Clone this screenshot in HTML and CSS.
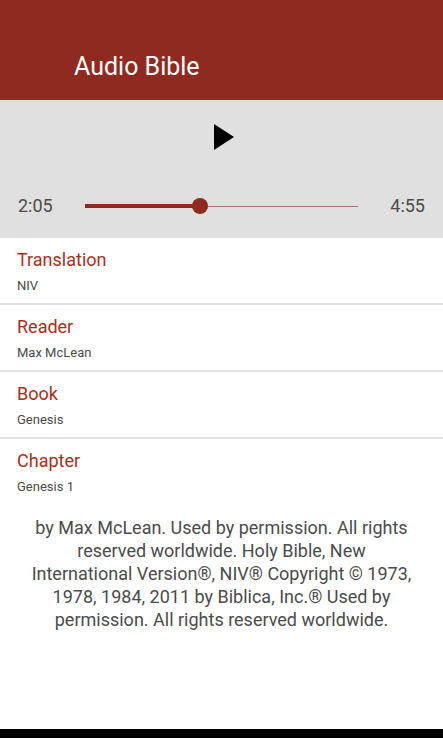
FILE: index.html
```html
<!DOCTYPE html>
<html lang="en">
<head>
<meta charset="utf-8">
<meta name="viewport" content="width=device-width, initial-scale=1">
<title>Audio Bible</title>
<link rel="stylesheet" href="styles.css">
</head>
<body>
<header class="app-bar"><h1 class="app-title">Audio Bible</h1></header>
<main class="content">
<section class="player" aria-label="Player">
<button class="play" type="button" aria-label="Play"><svg class="play-icon" viewBox="0 0 24 28" aria-hidden="true"><path d="M4 1v26l20-13z"/></svg></button>
<div class="timeline">
<span class="time">2:05</span>
<input class="seek" type="range" min="0" max="295" value="123" aria-label="Playback position">
<span class="time">4:55</span>
</div>
</section>
<nav class="options" aria-label="Audio options">
<button class="option" type="button"><span class="option-name">Translation</span><span class="option-value">NIV</span></button>
<button class="option" type="button"><span class="option-name">Reader</span><span class="option-value">Max McLean</span></button>
<button class="option" type="button"><span class="option-name">Book</span><span class="option-value">Genesis</span></button>
<button class="option" type="button"><span class="option-name">Chapter</span><span class="option-value">Genesis 1</span></button>
</nav>
<p class="copyright">by Max McLean. Used by permission. All rights reserved worldwide. Holy Bible, New International Version®, NIV® Copyright © 1973, 1978, 1984, 2011 by Biblica, Inc.® Used by permission. All rights reserved worldwide.</p>
</main>
<footer class="system-bar"></footer>
</body>
</html>
```
FILE: styles.css
```css
* { box-sizing: border-box; }
body {
  margin: 0;
  min-height: 100vh;
  display: flex;
  flex-direction: column;
  background: #fff;
  color: #4b4b4b;
  font-family: Roboto, sans-serif;
}
button { border: 0; padding: 0; background: none; font: inherit; color: inherit; }
.app-bar { padding: 51px 74px 17px; background: #8f2a20; color: #fff; }
.app-title { margin: 0; font-size: 25px; line-height: 32px; font-weight: 400; }
.content { flex: 1; }
.player { background: #e0e0e0; padding: 22px 18px 20px; }
.play { display: block; margin: 0 auto; width: 26px; height: 30px; }
.play-icon { display: block; width: 24px; height: 28px; margin: auto; fill: #000; }
.timeline { display: flex; align-items: center; justify-content: space-between; margin-top: 42px; }
.time { font-size: 18px; line-height: 24px; }
.seek {
  appearance: none;
  flex: 1;
  min-width: 0;
  height: 16px;
  margin: 0 32px;
  background:
    linear-gradient(#8f2a20, #8f2a20) left center / 42% 4px no-repeat,
    linear-gradient(#a07672, #a07672) center / 100% 1px no-repeat;
}
.seek::-webkit-slider-thumb { appearance: none; width: 16px; height: 16px; border-radius: 50%; background: #8f2a20; }
.option {
  display: flex;
  flex-direction: column;
  gap: 4px;
  width: 100%;
  padding: 10px 17px 8px;
  text-align: left;
}
.option + .option { border-top: 2px solid #e2e2e2; }
.option-name { font-size: 18px; line-height: 24px; color: #a92f1b; }
.option-value { font-size: 13px; line-height: 19px; }
.copyright { margin: 12px 30px; font-size: 18px; line-height: 23px; text-align: center; }
.system-bar { height: 9px; background: #000; }
```
